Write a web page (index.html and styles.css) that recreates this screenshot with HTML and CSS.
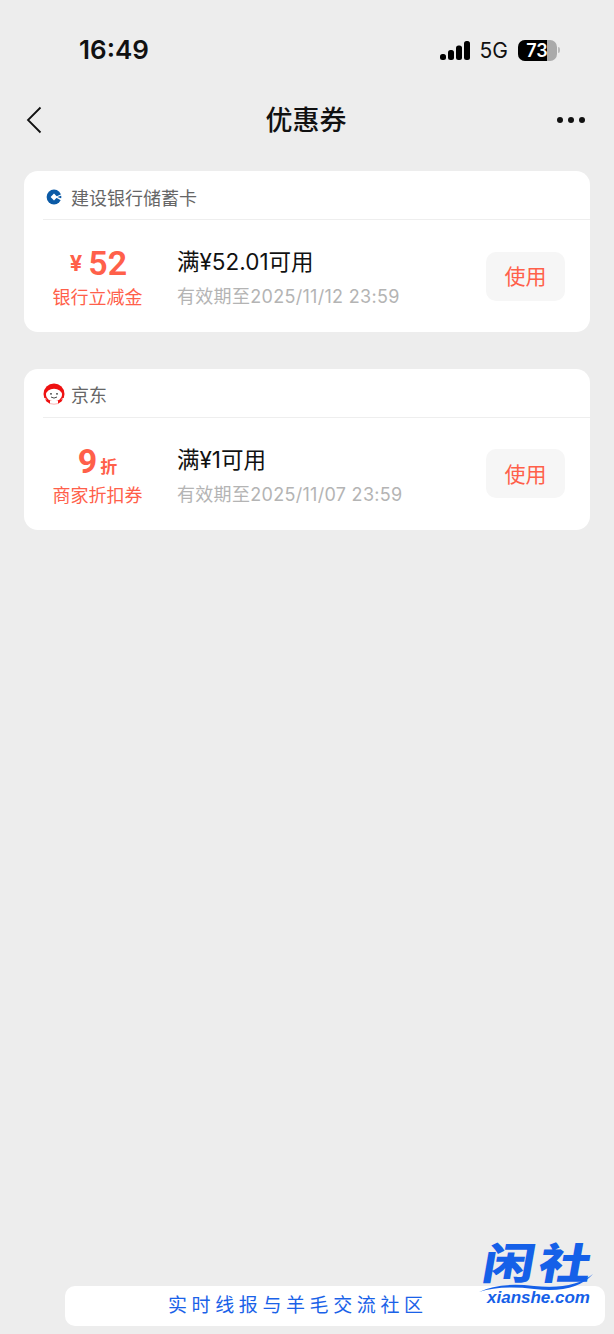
FILE: index.html
```html
<!DOCTYPE html>
<html lang="zh-CN">

<head>
    <meta charset="UTF-8">
    <meta name="viewport" content="width=device-width, initial-scale=1.0">
    <title>优惠券</title>
    <link rel="stylesheet" href="styles.css">
</head>

<body>
    <div class="status-bar">
        <span class="time">16:49</span>
        <div class="status-right">
            <svg class="signal" width="30" height="19" viewBox="0 0 30 19">
                <rect x="0" y="13" width="6" height="6" rx="2.5" />
                <rect x="8" y="9" width="6" height="10" rx="2.5" />
                <rect x="16" y="4.5" width="6" height="14.5" rx="2.5" />
                <rect x="24" y="0" width="6" height="19" rx="2.5" />
            </svg>
            <span class="net">5G</span>
            <div class="battery">
                <div class="battery-level"></div>
                <span class="battery-num">73</span>
            </div>
            <span class="battery-tip"></span>
        </div>
    </div>

    <div class="nav">
        <div class="nav-side">
            <svg class="back" width="16" height="28" viewBox="0 0 16 28">
                <path d="M14.5 1.5 L2 14 L14.5 26.5" />
            </svg>
        </div>
        <h1 class="title">优惠券</h1>
        <div class="nav-side nav-side-right">
            <div class="more"><i></i><i></i><i></i></div>
        </div>
    </div>

    <div class="list">
        <div class="card">
            <div class="card-head">
                <svg class="logo" width="22" height="22" viewBox="0 0 22 22">
                    <circle cx="11" cy="11" r="10.5" fill="#fff" />
                    <circle cx="11" cy="11" r="7.4" fill="#0b5aa6" />
                    <rect x="8.6" y="8.6" width="4.8" height="4.8" fill="#fff" transform="rotate(45 11 11)" />
                    <path d="M12 11 L20 7.6 L20 9 L14.4 11 L20 13 L20 15.4 Z" fill="#fff" />
                </svg>
                <span class="shop">建设银行储蓄卡</span>
            </div>
            <div class="card-body">
                <div class="value">
                    <div class="amount"><span class="unit-yen">¥</span><span class="num">52</span></div>
                    <div class="kind">银行立减金</div>
                </div>
                <div class="info">
                    <div class="rule">满¥52.01可用</div>
                    <div class="expire">有效期至2025/11/12 23:59</div>
                </div>
                <button class="use">使用</button>
            </div>
        </div>

        <div class="card">
            <div class="card-head">
                <svg class="logo" width="22" height="22" viewBox="0 0 22 22">
                    <circle cx="11" cy="11" r="10.5" fill="#ee1111" />
                    <ellipse cx="11" cy="12" rx="8" ry="6.2" fill="#fff" />
                    <rect x="7" y="17.6" width="8" height="4.4" fill="#fff" />
                    <path d="M0 15.2 L3.4 16.2 M22 15.2 L18.6 16.2" stroke="#fff" stroke-width="1" />
                    <path d="M7 20.6 Q11 21.8 15 20.6" fill="none" stroke="#f7a0a0" stroke-width="0.8" />
                    <circle cx="8" cy="10.8" r="0.9" fill="#333" />
                    <circle cx="14" cy="10.8" r="0.9" fill="#333" />
                    <path d="M8 14 Q11 16.2 14 14" fill="none" stroke="#333" stroke-width="0.9" />
                </svg>
                <span class="shop">京东</span>
            </div>
            <div class="card-body">
                <div class="value">
                    <div class="amount"><span class="num num-heavy">9</span><span class="unit-zhe">折</span></div>
                    <div class="kind">商家折扣券</div>
                </div>
                <div class="info">
                    <div class="rule">满¥1可用</div>
                    <div class="expire">有效期至2025/11/07 23:59</div>
                </div>
                <button class="use">使用</button>
            </div>
        </div>
    </div>

    <!-- watermark over the bottom of the page -->
    <div class="mark-bar">实时线报与羊毛交流社区</div>
    <div class="mark-logo">
        <span class="mark-name">闲社</span>
        <svg class="mark-wave" width="116" height="24" viewBox="0 0 116 24">
            <path d="M0 18 Q20 8 55 12 Q95 16 114 0 Q96 20 55 15 Q22 11 0 18 Z" />
        </svg>
        <span class="mark-url">xianshe.com</span>
    </div>
</body>

</html>
```

FILE: styles.css
```css
* {
    margin: 0;
    padding: 0;
    box-sizing: border-box;
}

body {
    position: relative;
    width: 614px;
    height: 1334px;
    overflow: hidden;
    background-color: #ededed;
    font-family: "Inter", "Noto Sans CJK SC", sans-serif;
    color: #111;
}

.status-bar {
    display: flex;
    justify-content: space-between;
    align-items: center;
    height: 100px;
    padding: 0 54px 0 79px;
}

.time {
    font-size: 26px;
    font-weight: 600;
    line-height: 100px;
}

.status-right {
    display: flex;
    align-items: center;
}

.signal {
    fill: #000;
    margin-right: 10px;
}

.net {
    font-size: 21px;
    font-weight: 400;
    margin-right: 10px;
}

.battery {
    position: relative;
    width: 39px;
    height: 21px;
    border-radius: 7px;
    background-color: #aaa;
    overflow: hidden;
}

.battery-level {
    width: 29px;
    height: 21px;
    background-color: #000;
}

.battery-num {
    position: absolute;
    left: 0;
    top: 0;
    width: 38px;
    text-align: center;
    font-size: 18px;
    line-height: 21px;
    font-weight: 600;
    color: #fff;
}

.battery-tip {
    width: 2px;
    height: 6px;
    margin-left: 1px;
    border-radius: 0 2px 2px 0;
    background-color: #bbb;
}

.nav {
    display: flex;
    justify-content: space-between;
    align-items: center;
    height: 40px;
    padding: 0 29px 0 26px;
}

.nav-side {
    display: flex;
    flex: 1;
}

.nav-side-right {
    justify-content: flex-end;
}

.back {
    fill: none;
    stroke: #111;
    stroke-width: 1.8;
}

.title {
    margin-left: 1px;
    padding-bottom: 2px;
    font-family: "Noto Sans CJK SC", sans-serif;
    font-size: 27px;
    font-weight: 500;
    line-height: 38px;
    color: #111;
}

.more {
    display: flex;
    gap: 5px;
}

.more i {
    display: block;
    width: 6px;
    height: 6px;
    border-radius: 50%;
    background-color: #111;
}

.list {
    display: flex;
    flex-direction: column;
    gap: 37px;
    padding: 31px 24px 0;
}

.card {
    height: 160.75px;
    border-radius: 14px;
    background-color: #fff;
}

.card-head {
    display: flex;
    align-items: center;
    gap: 6px;
    height: 49px;
    margin-left: 19px;
    padding-top: 3px;
    border-bottom: 1px solid #eee;
}

.logo {
    flex: none;
}

.shop {
    font-family: "Noto Sans CJK SC", sans-serif;
    font-size: 18px;
    color: #666;
}

.card-body {
    display: flex;
    align-items: center;
    height: 112px;
    padding-right: 25px;
}

.value {
    width: 147px;
    margin-right: 7px;
    color: #ff604a;
    text-align: center;
}

.amount {
    display: flex;
    justify-content: center;
    align-items: baseline;
    height: 40px;
    line-height: 40px;
}

.num {
    font-family: "Roboto", sans-serif;
    font-size: 34px;
    font-weight: 600;
}

.num-heavy {
    font-weight: 700;
}

.unit-yen {
    position: relative;
    top: -4px;
    left: 2px;
    margin-right: 8px;
    font-size: 22px;
    font-weight: 700;
}

.unit-zhe {
    margin-left: 3px;
    font-family: "Noto Sans CJK SC", sans-serif;
    font-size: 17px;
    font-weight: 700;
}

.kind {
    font-family: "Noto Sans CJK SC", sans-serif;
    font-size: 18px;
    line-height: 26px;
}

.info {
    flex: 1;
    margin-left: -1px;
    padding-top: 4px;
}

.rule {
    font-size: 22.5px;
    line-height: 32px;
    color: #111;
}

.expire {
    margin-top: 6px;
    font-size: 18px;
    line-height: 26px;
    letter-spacing: 0.3px;
    color: #b4b4b4;
}

.use {
    width: 79px;
    height: 49px;
    padding-bottom: 2px;
    border: none;
    border-radius: 10px;
    background-color: #f6f6f6;
    font-family: "Noto Sans CJK SC", sans-serif;
    font-size: 21px;
    color: #ff604a;
}

.mark-bar {
    position: absolute;
    left: 65px;
    top: 1286px;
    width: 540px;
    height: 40px;
    padding-left: 103px;
    border-radius: 10px;
    background-color: #fff;
    font-family: "Noto Sans CJK SC", sans-serif;
    font-size: 19px;
    line-height: 36px;
    letter-spacing: 4.6px;
    color: #1a62e8;
}

.mark-logo {
    position: absolute;
    left: 479px;
    top: 1236px;
    width: 120px;
    height: 72px;
    color: #1560e8;
}

.mark-name {
    position: absolute;
    left: 5px;
    top: 0;
    font-family: "Noto Sans CJK SC", sans-serif;
    font-size: 52px;
    line-height: 50px;
    font-weight: 900;
    letter-spacing: 4px;
    white-space: nowrap;
    transform: skewX(-10deg) scaleY(0.82);
}

.mark-wave {
    position: absolute;
    left: 0;
    top: 38px;
    fill: #1560e8;
}

.mark-url {
    position: absolute;
    left: 8px;
    top: 52px;
    font-family: "Liberation Sans", sans-serif;
    font-size: 17px;
    line-height: 20px;
    font-weight: 700;
    font-style: italic;
}
```
